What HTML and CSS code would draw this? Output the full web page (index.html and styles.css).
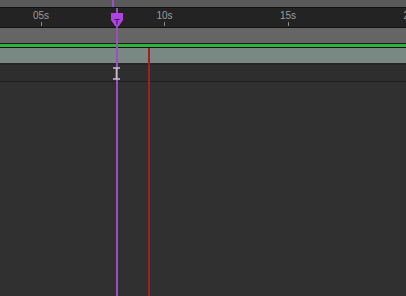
FILE: index.html
```html
<!DOCTYPE html>
<html lang="en">
<head>
    <meta charset="UTF-8">
    <meta name="viewport" content="width=device-width, initial-scale=1.0">
    <title>Timeline</title>
    <link rel="stylesheet" href="styles.css">
</head>
<body>
    <div class="timeline">
        <!-- Work area bar -->
        <div class="work-bar"></div>

        <!-- Time ruler -->
        <div class="ruler">
            <div class="mark"><span>05s</span><i></i></div>
            <div class="mark"><span>10s</span><i></i></div>
            <div class="mark"><span>15s</span><i></i></div>
            <div class="mark"><span>20s</span><i></i></div>
        </div>

        <div class="layer-bar"></div>
        <div class="range-bar"></div>
        <div class="track"></div>
        <div class="row"></div>
        <div class="rest"></div>

        <!-- Overlays -->
        <div class="cti-top"></div>
        <div class="cti-line"></div>
        <svg class="cti-head" width="12" height="14" viewBox="0 0 12 14">
            <path d="M0 0 H12 V7 L8 13 H4 L0 7 Z" fill="#b042e2"/>
            <path d="M3.5 6.5 H8.5 M6 6.5 V11.5" stroke="#3a1450" stroke-width="1"/>
        </svg>
        <div class="marker"></div>
        <svg class="ibeam" width="7" height="13" viewBox="0 0 7 13">
            <path d="M0 1 H7 M3.5 1 V12 M0 12 H7" stroke="#cbbcd3" stroke-width="1.6"/>
        </svg>
    </div>
</body>
</html>
```

FILE: styles.css
```css
body {
    margin: 0;
    background-color: #303030;
    font-family: "Liberation Sans", Arial, sans-serif;
    overflow: hidden;
}

.timeline {
    position: relative;
    width: 406px;
    height: 296px;
    display: flex;
    flex-direction: column;
    overflow: hidden;
}

.work-bar {
    height: 7px;
    background-color: #5a5a5a;
    border-bottom: 1px solid #111111;
}

/* Ruler with second marks every 123.5px */
.ruler {
    height: 19px;
    background-color: #232323;
    border-bottom: 1px solid #111111;
    display: flex;
    padding-left: 21px;
    gap: 83.5px;
}

.ruler .mark {
    width: 40px;
    flex-shrink: 0;
    display: flex;
    flex-direction: column;
    align-items: center;
}

.ruler .mark span {
    font-size: 10px;
    line-height: 10px;
    margin-top: 3px;
    color: #9c9c9c;
}

.ruler .mark i {
    width: 1px;
    height: 4px;
    margin-top: 1px;
    background-color: #8a8a8a;
}

.layer-bar {
    height: 15px;
    background-color: #656565;
    border-bottom: 1px solid #1c1c1c;
}

.range-bar {
    height: 3px;
    background-color: #30b33d;
    border-bottom: 1px solid #121212;
}

.track {
    height: 15px;
    background-color: #7a8884;
    border-bottom: 2px solid #262626;
}

.row {
    height: 16px;
    background-color: #2e2e2e;
    border-bottom: 1px solid #1f1f1f;
}

.rest {
    flex: 1;
    background-color: #303030;
}

/* Current time indicator */
.cti-top {
    position: absolute;
    left: 112px;
    top: 0;
    width: 2px;
    height: 7px;
    background-color: #9a52c4;
}

.cti-line {
    position: absolute;
    left: 116px;
    top: 8px;
    bottom: 0;
    width: 2px;
    background-color: #9650c0;
}

.cti-head {
    position: absolute;
    left: 111px;
    top: 13px;
}

.marker {
    position: absolute;
    left: 148px;
    top: 48px;
    bottom: 0;
    width: 2px;
    background-color: #a11f1f;
}

.ibeam {
    position: absolute;
    left: 113px;
    top: 67px;
}
```
